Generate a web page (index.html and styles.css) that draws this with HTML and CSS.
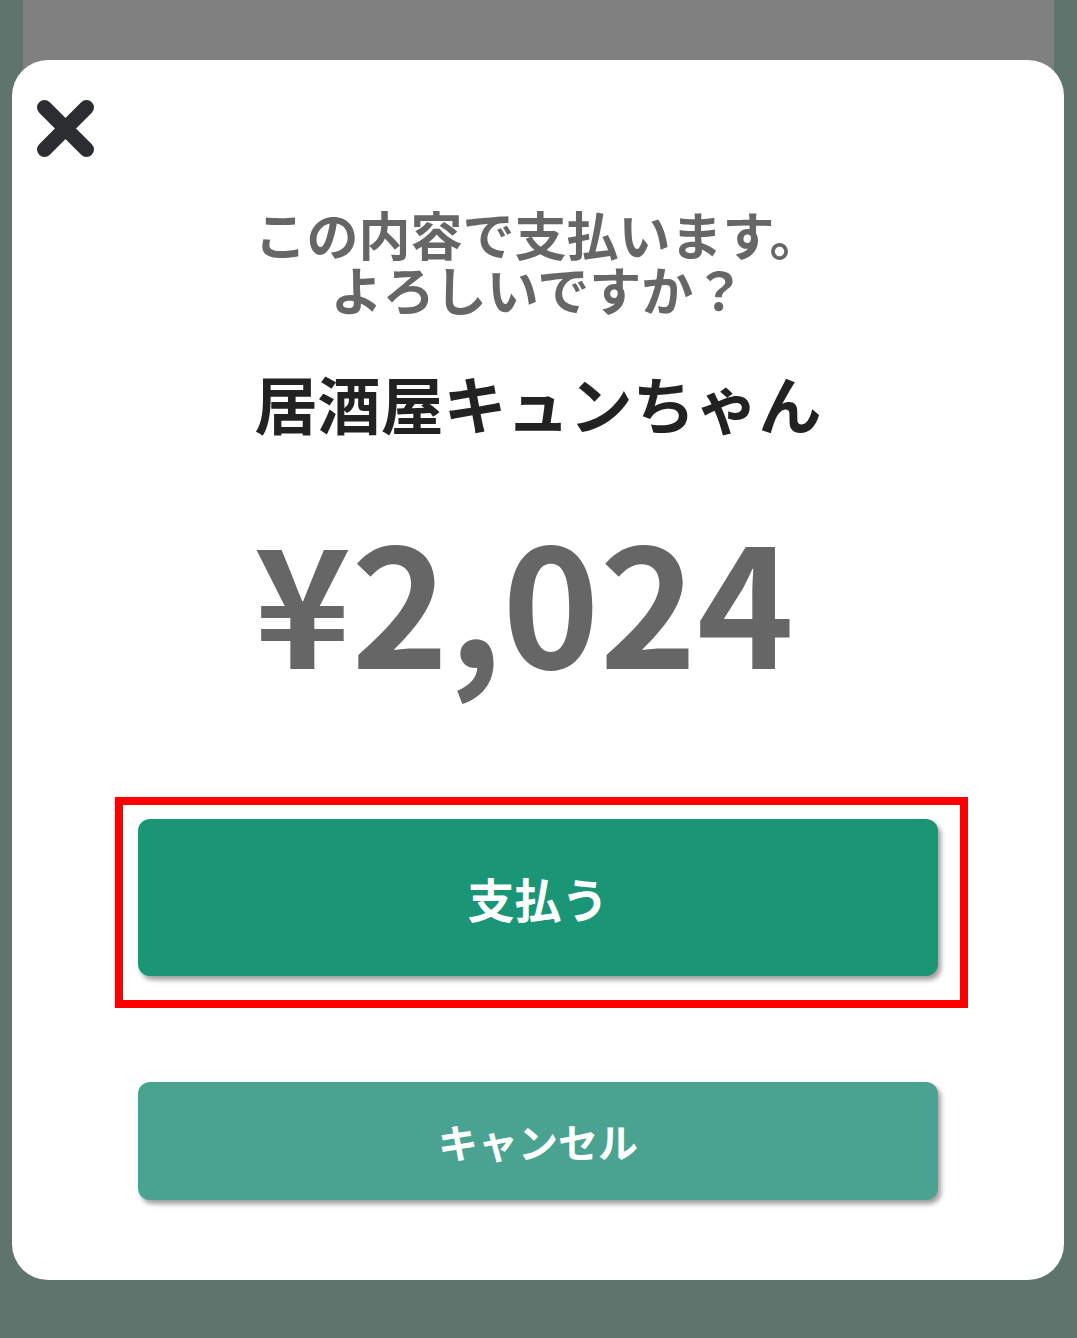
FILE: index.html
```html
<!DOCTYPE html>
<html lang="ja">
<head>
<meta charset="utf-8">
<title>支払い確認</title>
<link rel="stylesheet" href="styles.css">
</head>
<body>
<div class="card">
  <button class="close" aria-label="閉じる">
    <svg width="57" height="57" viewBox="0 0 57 57"><path d="M7.5 7.5 L49.5 49.5 M49.5 7.5 L7.5 49.5" stroke="#2b2d31" stroke-width="15" stroke-linecap="round" fill="none"/></svg>
  </button>
  <p class="question"><span class="q-line">この内容で支払います。</span><span class="q-line">よろしいですか？</span></p>
  <h1 class="shop">居酒屋キュンちゃん</h1>
  <p class="price">¥2,024</p>
  <div class="highlight">
    <button class="btn btn-pay">支払う</button>
  </div>
  <button class="btn btn-cancel">キャンセル</button>
</div>
</body>
</html>
```
FILE: styles.css
```css
html, body {
  margin: 0;
  padding: 0;
}
body {
  width: 1077px;
  height: 1338px;
  overflow: hidden;
  background: linear-gradient(#808080, #808080) no-repeat 23px 0 / 1031px 100px, #5f746d;
  font-family: "Noto Sans CJK JP", "Noto Sans", sans-serif;
  padding-top: 60px;
  box-sizing: border-box;
}
.card {
  margin-left: 12px;
  width: 1052px;
  height: 1220px;
  background: #fff;
  border-radius: 36px;
  display: flex;
  flex-direction: column;
  align-items: center;
  box-sizing: border-box;
  padding-top: 40px;
}
.close {
  align-self: flex-start;
  margin-left: 25px;
  width: 57px;
  height: 57px;
  padding: 0;
  border: 0;
  background: none;
  display: block;
}
.close svg { display: block; }
.question {
  margin: 49px 0 0;
  font-size: 52px;
  line-height: 55px;
  font-weight: 700;
  color: #666;
  text-align: center;
  display: flex;
  flex-direction: column;
  align-items: center;
}
.q-line {
  display: block;
  height: 55px;
}
.shop {
  margin: 54px 0 0;
  font-size: 63px;
  line-height: 64px;
  font-weight: 700;
  color: #222;
}
.price {
  margin: 80px 28px 0 0;
  font-size: 165px;
  line-height: 168px;
  font-weight: 700;
  color: #666;
}
.highlight {
  align-self: flex-start;
  margin: 115px 0 0 103px;
  border: 8px solid #ff0000;
  padding: 14px 22px 24px 15px;
}
.btn {
  display: block;
  width: 800px;
  border: 0;
  border-radius: 12px;
  color: #fff;
  font-family: "Noto Sans CJK JP", "Noto Sans", sans-serif;
  font-weight: 700;
  box-shadow: 3px 4px 5px rgba(0, 0, 0, 0.38);
  padding: 0;
}
.btn-pay {
  height: 157px;
  background: #1a9677;
  font-size: 47px;
}
.btn-cancel {
  margin-top: 74px;
  height: 118px;
  background: #4aa390;
  font-size: 40px;
}
```
